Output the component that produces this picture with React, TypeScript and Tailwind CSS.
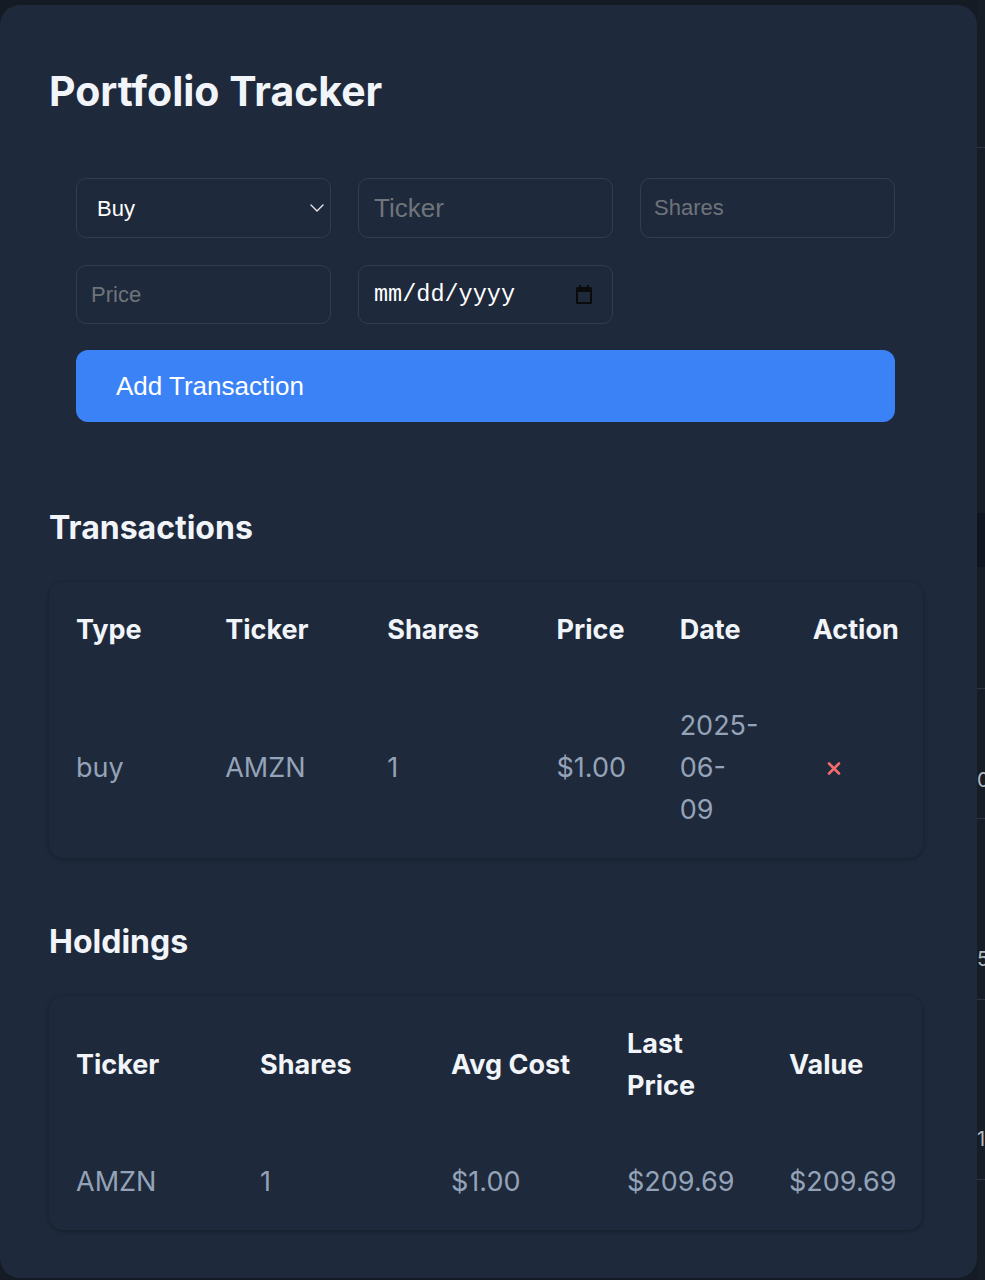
import React from 'react';

const transactions = [
  { type: 'buy', ticker: 'AMZN', shares: '1', price: '$1.00', date: '2025-06-09' },
];

const holdings = [
  { ticker: 'AMZN', shares: '1', avg: '$1.00', last: '$209.69', value: '$209.69' },
];

const txHeads = [
  { label: 'Type', w: 'w-[149px]' },
  { label: 'Ticker', w: 'w-[162px]' },
  { label: 'Shares', w: 'w-[169px]' },
  { label: 'Price', w: 'w-[123px]' },
  { label: 'Date', w: 'w-[133px]' },
  { label: 'Action', w: 'w-[137px]' },
];

const holdHeads = [
  { label: 'Ticker', w: 'w-[184px]', wrap: false },
  { label: 'Shares', w: 'w-[191px]', wrap: false },
  { label: 'Avg Cost', w: 'w-[176px]', wrap: false },
  { label: 'Last Price', w: 'w-[162px]', wrap: true },
  { label: 'Value', w: 'w-[160px]', wrap: false },
];

const th = 'px-[27px] py-[27px] text-left align-middle font-bold text-[27px] leading-[42px] text-[#f1f5f9]';
const td = 'px-[27px] py-[27px] text-left align-middle font-normal text-[27px] leading-[42px] text-[#94a3b8]';

function Chevron() {
  return (
    <svg width="14" height="8" viewBox="0 0 14 8" fill="none" className="pointer-events-none absolute right-[7px] top-[26px]">
      <path d="M1 1l6 6 6-6" stroke="#e5e7eb" strokeWidth="1.4" strokeLinecap="round" strokeLinejoin="round" />
    </svg>
  );
}

function CalendarIcon() {
  return (
    <svg width="18" height="20" viewBox="0 0 18 20" fill="none">
      <rect x="4" y="0" width="2" height="3" fill="#0b0b0b" />
      <rect x="12" y="0" width="2" height="3" fill="#0b0b0b" />
      <rect x="1" y="2" width="16" height="17" rx="1.5" fill="#0b0b0b" />
      <rect x="3" y="7" width="12" height="10" fill="#1e293b" />
    </svg>
  );
}

function RemoveIcon() {
  return (
    <svg width="14" height="13" viewBox="0 0 14 13" fill="none">
      <path d="M2 1.5l10 10M12 1.5l-10 10" stroke="#f06b6b" strokeWidth="2.6" strokeLinecap="round" />
    </svg>
  );
}

export default function App() {
  return (
    <div className="flex min-h-[1280px] w-[985px] overflow-hidden bg-[#151b25] font-['Inter',sans-serif]">
      <div className="mt-[5px] mb-[2px] w-[977px] shrink-0 rounded-[20px] bg-[#1e293b] px-[49px] pt-[61px] pb-[46px]">
        <h1 className="text-[41px] leading-[50px] font-bold text-[#f1f5f9]">Portfolio Tracker</h1>

        <div className="mt-[62px] px-[27px] font-['Liberation_Sans',Arial,sans-serif]">
          <div className="grid w-[819px] grid-cols-3 gap-[27px]">
            <div className="relative">
              <select className="h-[60px] w-full appearance-none rounded-[10px] border border-[#323d50] bg-transparent pl-[20px] text-[22px] text-white outline-none">
                <option>Buy</option>
                <option>Sell</option>
              </select>
              <Chevron />
            </div>
            <input
              placeholder="Ticker"
              className="h-[60px] w-full rounded-[10px] border border-[#323d50] bg-transparent pl-[15px] text-[26px] text-white outline-none placeholder:text-[#6f747b]"
            />
            <input
              placeholder="Shares"
              className="h-[60px] w-full rounded-[10px] border border-[#323d50] bg-transparent pl-[13px] text-[22px] text-white outline-none placeholder:text-[#6f747b]"
            />
            <input
              placeholder="Price"
              className="h-[59px] w-full rounded-[10px] border border-[#323d50] bg-transparent pl-[14px] text-[22px] text-white outline-none placeholder:text-[#6f747b]"
            />
            <div className="flex h-[59px] w-full items-center justify-between rounded-[10px] border border-[#323d50] pr-[19px] pl-[15px]">
              <span className="font-['Liberation_Mono',monospace] text-[23.5px] text-white">mm/dd/yyyy</span>
              <CalendarIcon />
            </div>
          </div>
          <button className="mt-[26px] h-[72px] w-[819px] rounded-[12px] bg-[#3b82f6] pl-[40px] text-left text-[26px] text-white">
            Add Transaction
          </button>
        </div>

        <h2 className="mt-[86px] text-[32px] leading-[40px] font-bold text-[#f1f5f9]">Transactions</h2>
        <div className="mt-[34px] w-[874px] overflow-hidden rounded-[14px] shadow-[0_1px_4px_rgba(0,0,0,0.3)]">
          <table className="w-full table-fixed border-collapse">
            <thead>
              <tr>
                {txHeads.map((h) => (
                  <th key={h.label} className={`${th} ${h.w} whitespace-nowrap`}>
                    {h.label}
                  </th>
                ))}
              </tr>
            </thead>
            <tbody>
              {transactions.map((t) => (
                <tr key={t.ticker + t.date}>
                  <td className={td}>{t.type}</td>
                  <td className={td}>{t.ticker}</td>
                  <td className={td}>{t.shares}</td>
                  <td className={td}>{t.price}</td>
                  <td className={td}>{t.date}</td>
                  <td className={td}>
                    <button className="ml-[14px] flex items-center">
                      <RemoveIcon />
                    </button>
                  </td>
                </tr>
              ))}
            </tbody>
          </table>
        </div>

        <h2 className="mt-[64px] text-[32px] leading-[40px] font-bold text-[#f1f5f9]">Holdings</h2>
        <div className="mt-[34px] w-[873px] overflow-hidden rounded-[14px] shadow-[0_1px_4px_rgba(0,0,0,0.3)]">
          <table className="w-full table-fixed border-collapse">
            <thead>
              <tr>
                {holdHeads.map((h) => (
                  <th key={h.label} className={`${th} ${h.w} ${h.wrap ? '' : 'whitespace-nowrap'}`}>
                    {h.label}
                  </th>
                ))}
              </tr>
            </thead>
            <tbody>
              {holdings.map((h) => (
                <tr key={h.ticker}>
                  <td className={td}>{h.ticker}</td>
                  <td className={td}>{h.shares}</td>
                  <td className={`${td} whitespace-nowrap`}>{h.avg}</td>
                  <td className={`${td} whitespace-nowrap`}>{h.last}</td>
                  <td className={`${td} whitespace-nowrap`}>{h.value}</td>
                </tr>
              ))}
            </tbody>
          </table>
        </div>
      </div>

      {/* panel behind, mostly hidden */}
      <div className="flex flex-1 flex-col bg-[#161d27] text-[20px] leading-none text-[#b4b9c1]">
        <div className="h-[148px] shrink-0 border-b border-[#2b3442]" />
        <div className="h-[365px] shrink-0" />
        <div className="h-[54px] shrink-0 bg-[#0f1521]" />
        <div className="h-[122px] shrink-0 border-b border-[#2b3442]" />
        <div className="flex h-[130px] shrink-0 items-end border-b border-[#2b3442] pb-[28px]">0</div>
        <div className="flex h-[181px] shrink-0 items-end border-b border-[#2b3442] pb-[30px]">5</div>
        <div className="flex h-[180px] shrink-0 items-end border-b border-[#2b3442] pb-[30px]">1</div>
      </div>
    </div>
  );
}
